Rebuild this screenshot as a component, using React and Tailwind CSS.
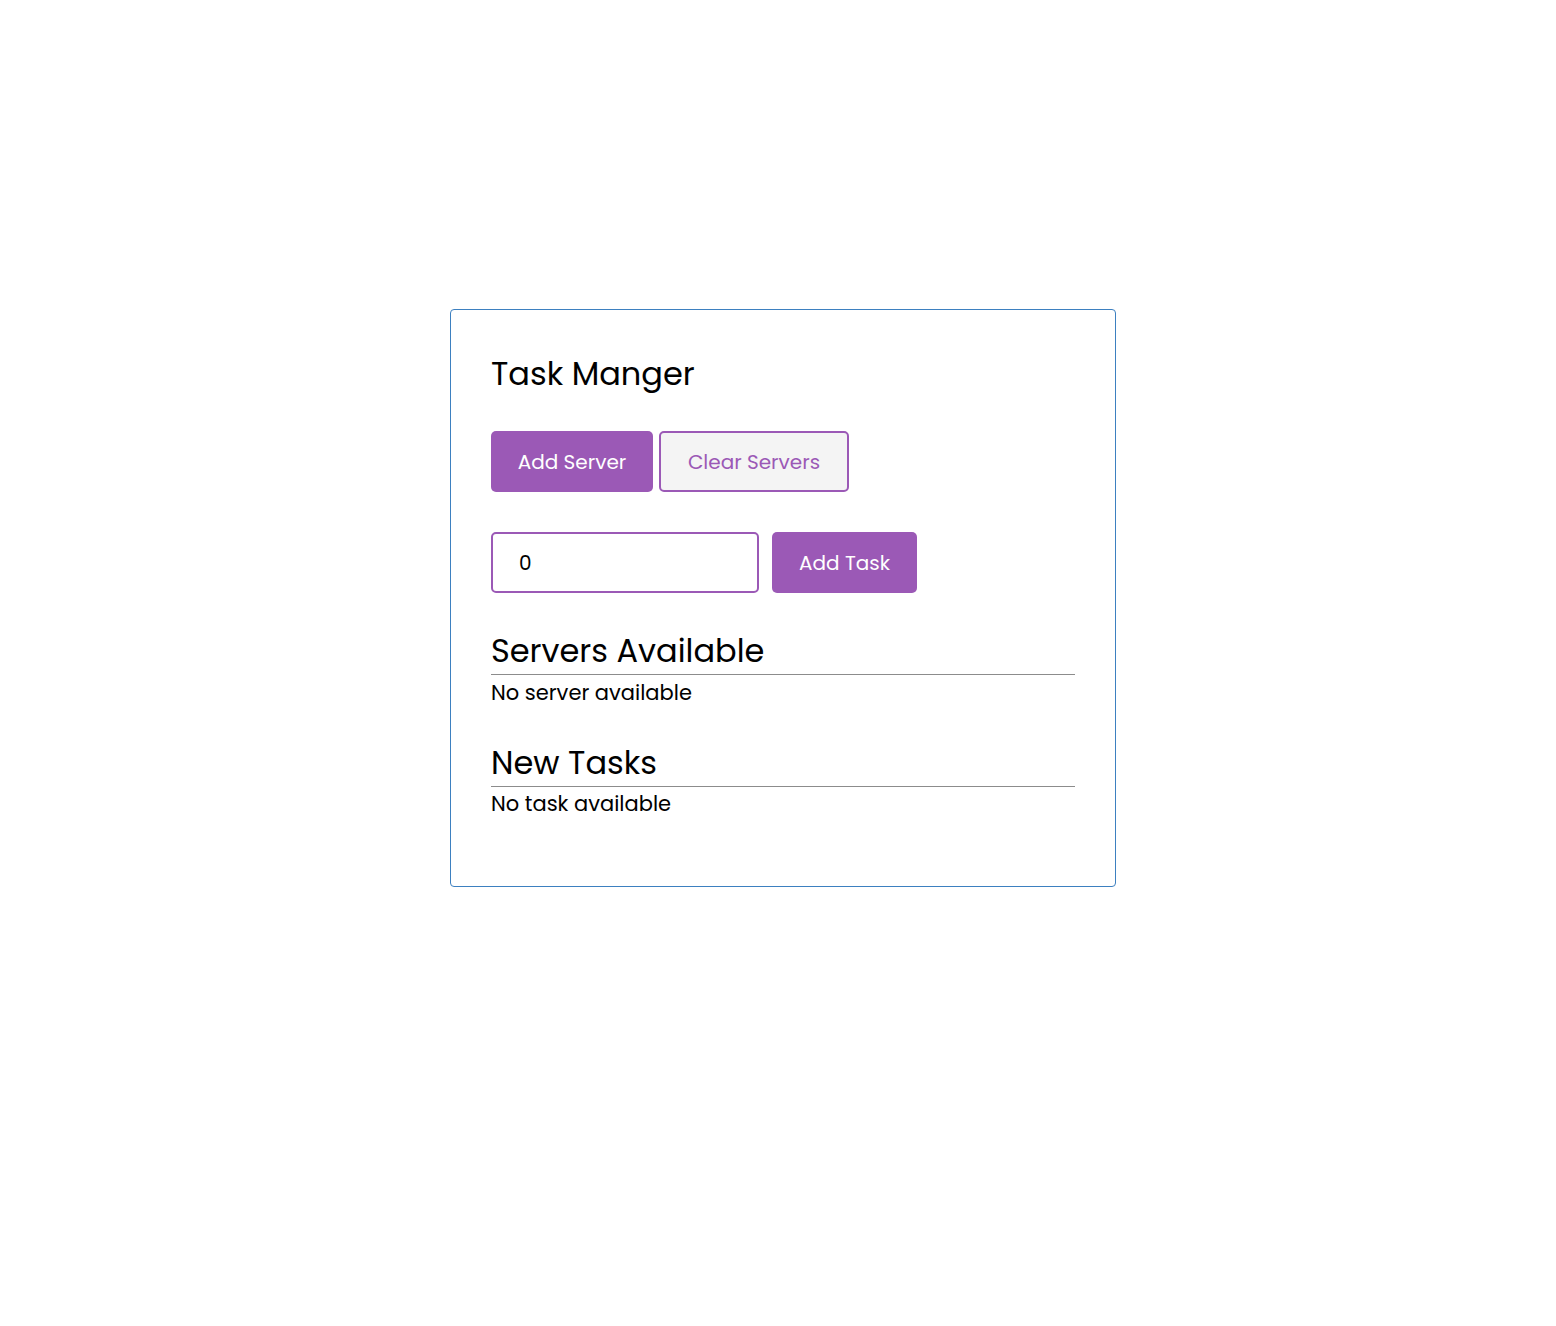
import {useState} from 'react';

const font = {fontFamily: 'Poppins, Inter, "Noto Sans", sans-serif'};

const App = () => {
    const [count, setCount] = useState(0);
    const [servers, setServers] = useState([]);
    const [tasks, setTasks] = useState([]);

    return (
        <div className="min-h-[1326px] bg-white pt-[309px]" style={font}>
            <div className="ml-[450px] w-[666px] h-[578px] rounded border border-[#3d80c0] px-10 pt-[40px]">
                <h2 className="text-[32px] leading-[48px] text-black">Task Manger</h2>

                <div className="mt-[33px] flex gap-[6px]">
                    <button
                        className="h-[61px] w-[162px] rounded-[5px] bg-[#9b59b6] text-[20px] text-white"
                        onClick={() => setServers([...servers, servers.length + 1])}
                    >
                        Add Server
                    </button>
                    <button
                        className="h-[61px] w-[190px] rounded-[5px] border-2 border-[#9b59b6] bg-[#f4f4f4] text-[20px] text-[#9b59b6]"
                        onClick={() => setServers([])}
                    >
                        Clear Servers
                    </button>
                </div>

                <div className="mt-[40px] flex gap-[13px]">
                    <input
                        type="number"
                        value={count}
                        onChange={(e) => setCount(e.target.value)}
                        className="h-[61px] w-[268px] rounded-[5px] border-2 border-[#9b59b6] px-[26px] text-[20px] text-black outline-none"
                    />
                    <button
                        className="h-[61px] w-[145px] rounded-[5px] bg-[#9b59b6] text-[20px] text-white"
                        onClick={() => setTasks([...tasks, count])}
                    >
                        Add Task
                    </button>
                </div>

                <div className="mt-[38px] w-[584px]">
                    <h3 className="text-[32px] leading-[40px] text-black border-b border-[#8c8c8c] pb-[3px]">Servers Available</h3>
                    <p className="text-[21px] leading-[36px] text-black">
                        {servers.length ? servers.map((s) => `Server ${s}`).join(', ') : 'No server available'}
                    </p>
                </div>

                <div className="mt-[32px] w-[584px]">
                    <h3 className="text-[32px] leading-[40px] text-black border-b border-[#8c8c8c] pb-[3px]">New Tasks</h3>
                    <p className="text-[21px] leading-[34px] text-black">
                        {tasks.length ? tasks.join(', ') : 'No task available'}
                    </p>
                </div>
            </div>
        </div>
    );
};

export default App;
